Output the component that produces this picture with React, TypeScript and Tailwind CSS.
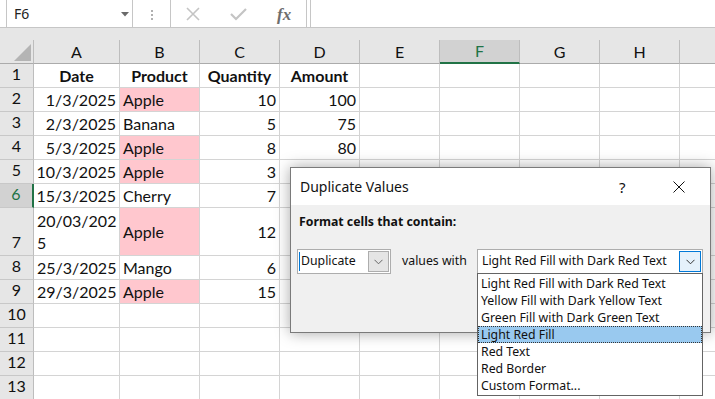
import React from 'react';

const colW: Record<string, string> = {
  A: 'w-[86px]',
  B: 'w-[80px]',
  C: 'w-[80px]',
  D: 'w-[80px]',
  E: 'w-[80px]',
  F: 'w-[80px]',
  G: 'w-[80px]',
  H: 'w-[80px]',
  I: 'w-[80px]',
};
const letters = ['A', 'B', 'C', 'D', 'E', 'F', 'G', 'H', 'I'];

type Cell = { t?: React.ReactNode; align?: 'l' | 'r' | 'c'; bold?: boolean; pink?: boolean };
type Row = { n: number; tall?: boolean; cells: Record<string, Cell> };

const rows: Row[] = [
  {
    n: 1,
    cells: {
      A: { t: 'Date', align: 'c', bold: true },
      B: { t: 'Product', align: 'c', bold: true },
      C: { t: 'Quantity', align: 'c', bold: true },
      D: { t: 'Amount', align: 'c', bold: true },
    },
  },
  { n: 2, cells: { A: { t: '1/3/2025', align: 'r' }, B: { t: 'Apple', pink: true }, C: { t: '10', align: 'r' }, D: { t: '100', align: 'r' } } },
  { n: 3, cells: { A: { t: '2/3/2025', align: 'r' }, B: { t: 'Banana' }, C: { t: '5', align: 'r' }, D: { t: '75', align: 'r' } } },
  { n: 4, cells: { A: { t: '5/3/2025', align: 'r' }, B: { t: 'Apple', pink: true }, C: { t: '8', align: 'r' }, D: { t: '80', align: 'r' } } },
  { n: 5, cells: { A: { t: '10/3/2025', align: 'r' }, B: { t: 'Apple', pink: true }, C: { t: '3', align: 'r' } } },
  { n: 6, cells: { A: { t: '15/3/2025', align: 'r' }, B: { t: 'Cherry' }, C: { t: '7', align: 'r' } } },
  {
    n: 7,
    tall: true,
    cells: {
      A: {
        t: (
          <span className="block leading-[22px]">
            20/03/202
            <br />5
          </span>
        ),
      },
      B: { t: 'Apple', pink: true },
      C: { t: '12', align: 'r' },
    },
  },
  { n: 8, cells: { A: { t: '25/3/2025' }, B: { t: 'Mango' }, C: { t: '6', align: 'r' } } },
  { n: 9, cells: { A: { t: '29/3/2025' }, B: { t: 'Apple', pink: true }, C: { t: '15', align: 'r' } } },
  { n: 10, cells: {} },
  { n: 11, cells: {} },
  { n: 12, cells: {} },
  { n: 13, cells: {} },
];

function Chevron({ color = '#444' }: { color?: string }) {
  return (
    <svg width="9" height="6" viewBox="0 0 9 6">
      <path d="M0.5 0.8 L4.5 4.8 L8.5 0.8" fill="none" stroke={color} strokeWidth="1" />
    </svg>
  );
}

function TopBar() {
  return (
    <div className="h-[28px] bg-white border-b border-[#c6c6c6] flex font-['Noto_Sans',sans-serif]">
      <div className="ml-[6px] w-[127px] h-full border-x border-[#c6c6c6] flex items-center pl-[7px] relative text-[14px] text-[#222]">
        F6
        <svg className="absolute left-[114px] top-[12px]" width="8" height="5" viewBox="0 0 8 5">
          <path d="M0 0 L8 0 L4 4.5 Z" fill="#6a6a6a" />
        </svg>
      </div>
      <div className="w-[37px] h-full flex flex-col items-center justify-start pt-[10px] gap-[2px]">
        <div className="w-[2px] h-[2px] bg-[#b0b0b0]" />
        <div className="w-[2px] h-[2px] bg-[#b0b0b0]" />
        <div className="w-[2px] h-[2px] bg-[#b0b0b0]" />
      </div>
      <div className="w-[137px] h-full border-x border-[#c6c6c6] relative">
        <svg className="absolute left-[15px] top-[7px]" width="14" height="14" viewBox="0 0 14 14">
          <path d="M1 1 L13 13 M13 1 L1 13" stroke="#c4c4c4" strokeWidth="1.6" fill="none" />
        </svg>
        <svg className="absolute left-[59px] top-[7px]" width="17" height="14" viewBox="0 0 17 14">
          <path d="M1 7 L6 12 L16 2" stroke="#c4c4c4" strokeWidth="2.2" fill="none" />
        </svg>
        <span className="absolute left-[106px] top-[2px] font-['Liberation_Serif',serif] italic text-[17px] text-[#6e6e6e] font-bold">
          fx
        </span>
      </div>
      <div className="ml-[3px] flex-1 h-full border-l border-[#c6c6c6]" />
    </div>
  );
}

function ColumnHeader() {
  return (
    <div className="flex h-[24px] bg-[#e6e6e6]">
      <div className="w-[34px] shrink-0 h-full border-r border-b border-r-[#bdbdbd] border-b-[#ababab] relative">
        <svg className="absolute left-[14px] top-[4px]" width="18" height="18" viewBox="0 0 18 18">
          <path d="M17 0 L17 17 L0 17 Z" fill="#b4b4b4" />
        </svg>
      </div>
      {letters.map((k) =>
        k === 'F' ? (
          <div
            key={k}
            className={`${colW[k]} shrink-0 h-full border-r border-r-[#bdbdbd] border-b-2 border-b-[#217346] bg-[#d2d2d2] flex items-center justify-center text-[#217346]`}
          >
            {k}
          </div>
        ) : (
          <div
            key={k}
            className={`${colW[k]} shrink-0 h-full border-r border-b border-r-[#bdbdbd] border-b-[#ababab] flex items-center justify-center text-[#111]`}
          >
            {k === 'I' ? '' : k}
          </div>
        )
      )}
    </div>
  );
}

function SheetRow({ row }: { row: Row }) {
  const h = row.tall ? 'h-[48px]' : 'h-[24px]';
  const sel = row.n === 6;
  return (
    <div className={`flex ${h}`}>
      {sel ? (
        <div className="w-[34px] shrink-0 h-full bg-[#d2d2d2] border-b border-b-[#c8c8c8] border-r-2 border-r-[#217346] flex items-end justify-center pb-[1px] text-[#217346]">
          {row.n}
        </div>
      ) : (
        <div className="w-[34px] shrink-0 h-full bg-[#e6e6e6] border-b border-r border-b-[#c8c8c8] border-r-[#bdbdbd] flex items-end justify-center pb-[1px] text-[#111]">
          {row.n}
        </div>
      )}
      {letters.map((k) => {
        const c = row.cells[k] || {};
        const al = c.align === 'r' ? 'justify-end' : c.align === 'c' ? 'justify-center' : 'justify-start';
        return (
          <div
            key={k}
            className={`${colW[k]} shrink-0 h-full border-r border-b border-[#d4d4d4] flex items-center px-[3px] whitespace-nowrap text-[#111] ${al} ${
              c.pink ? 'bg-[#ffc7ce]' : 'bg-white'
            } ${c.bold ? 'font-bold' : ''}`}
          >
            {c.t}
          </div>
        );
      })}
    </div>
  );
}

function Dialog() {
  return (
    <div className="absolute left-[290px] top-[167px] w-[421px] h-[166px] border border-[#7a7a7a] bg-[#f0f0f0] shadow-[0_0_14px_rgba(0,0,0,0.35)] font-['Noto_Sans',sans-serif] text-[#111]">
      <div className="h-[37px] bg-white relative">
        <span className="absolute left-[9px] top-[8px] text-[14px]">Duplicate Values</span>
        <span className="absolute left-[328px] top-[8px] text-[15px]">?</span>
        <svg className="absolute left-[382px] top-[13px]" width="12" height="12" viewBox="0 0 12 12">
          <path d="M0.5 0.5 L11.5 11.5 M11.5 0.5 L0.5 11.5" stroke="#111" strokeWidth="1" fill="none" />
        </svg>
      </div>
      <div className="pt-[8px]">
        <div className="pl-[8px] font-bold text-[12.3px] leading-[18px]">Format cells that contain:</div>
        <div className="flex items-center mt-[18px] pl-[6px] text-[12.3px]">
          <div className="w-[94px] h-[25px] bg-white border border-[#adadad] relative flex items-center">
            <div className="absolute left-[1px] top-[2px] w-[1px] h-[19px] bg-[#0078d7]" />
            <span className="pl-[3px]">Duplicate</span>
            <div className="absolute right-[1px] top-[1px] w-[21px] h-[21px] bg-[#e5e5e5] border border-[#adadad] flex items-center justify-center">
              <Chevron color="#666" />
            </div>
          </div>
          <div className="w-[86px] pl-[11px]">values with</div>
          <div className="w-[226px] h-[25px] bg-white border border-[#adadad] relative flex items-center">
            <span className="pl-[4px]">Light Red Fill with Dark Red Text</span>
            <div className="absolute right-[1px] top-[1px] w-[22px] h-[21px] bg-[#e5f1fb] border border-[#0078d7] flex items-center justify-center">
              <Chevron color="#333" />
            </div>
          </div>
        </div>
      </div>
    </div>
  );
}

const listItems = [
  'Light Red Fill with Dark Red Text',
  'Yellow Fill with Dark Yellow Text',
  'Green Fill with Dark Green Text',
  'Light Red Fill',
  'Red Text',
  'Red Border',
  'Custom Format...',
];

function DropList() {
  return (
    <div className="absolute left-[477px] top-[273px] w-[226px] h-[123px] bg-white border border-[#646464] pt-[1px] font-['Noto_Sans',sans-serif] text-[12.3px] text-[#111]">
      {listItems.map((t, i) =>
        i === 3 ? (
          <div key={t} className="h-[17px] leading-[15px] pl-[2px] bg-[#99c9ef] border border-dotted border-[#333]">
            {t}
          </div>
        ) : (
          <div key={t} className="h-[17px] leading-[17px] pl-[3px]">
            {t}
          </div>
        )
      )}
    </div>
  );
}

export default function App() {
  return (
    <div className="w-[715px] h-[399px] overflow-hidden relative bg-[#e6e6e6] font-['Lato',sans-serif] text-[16px]">
      <TopBar />
      <div className="h-[12px] bg-[#e6e6e6]" />
      <ColumnHeader />
      {rows.map((r) => (
        <SheetRow key={r.n} row={r} />
      ))}
      <Dialog />
      <DropList />
    </div>
  );
}
